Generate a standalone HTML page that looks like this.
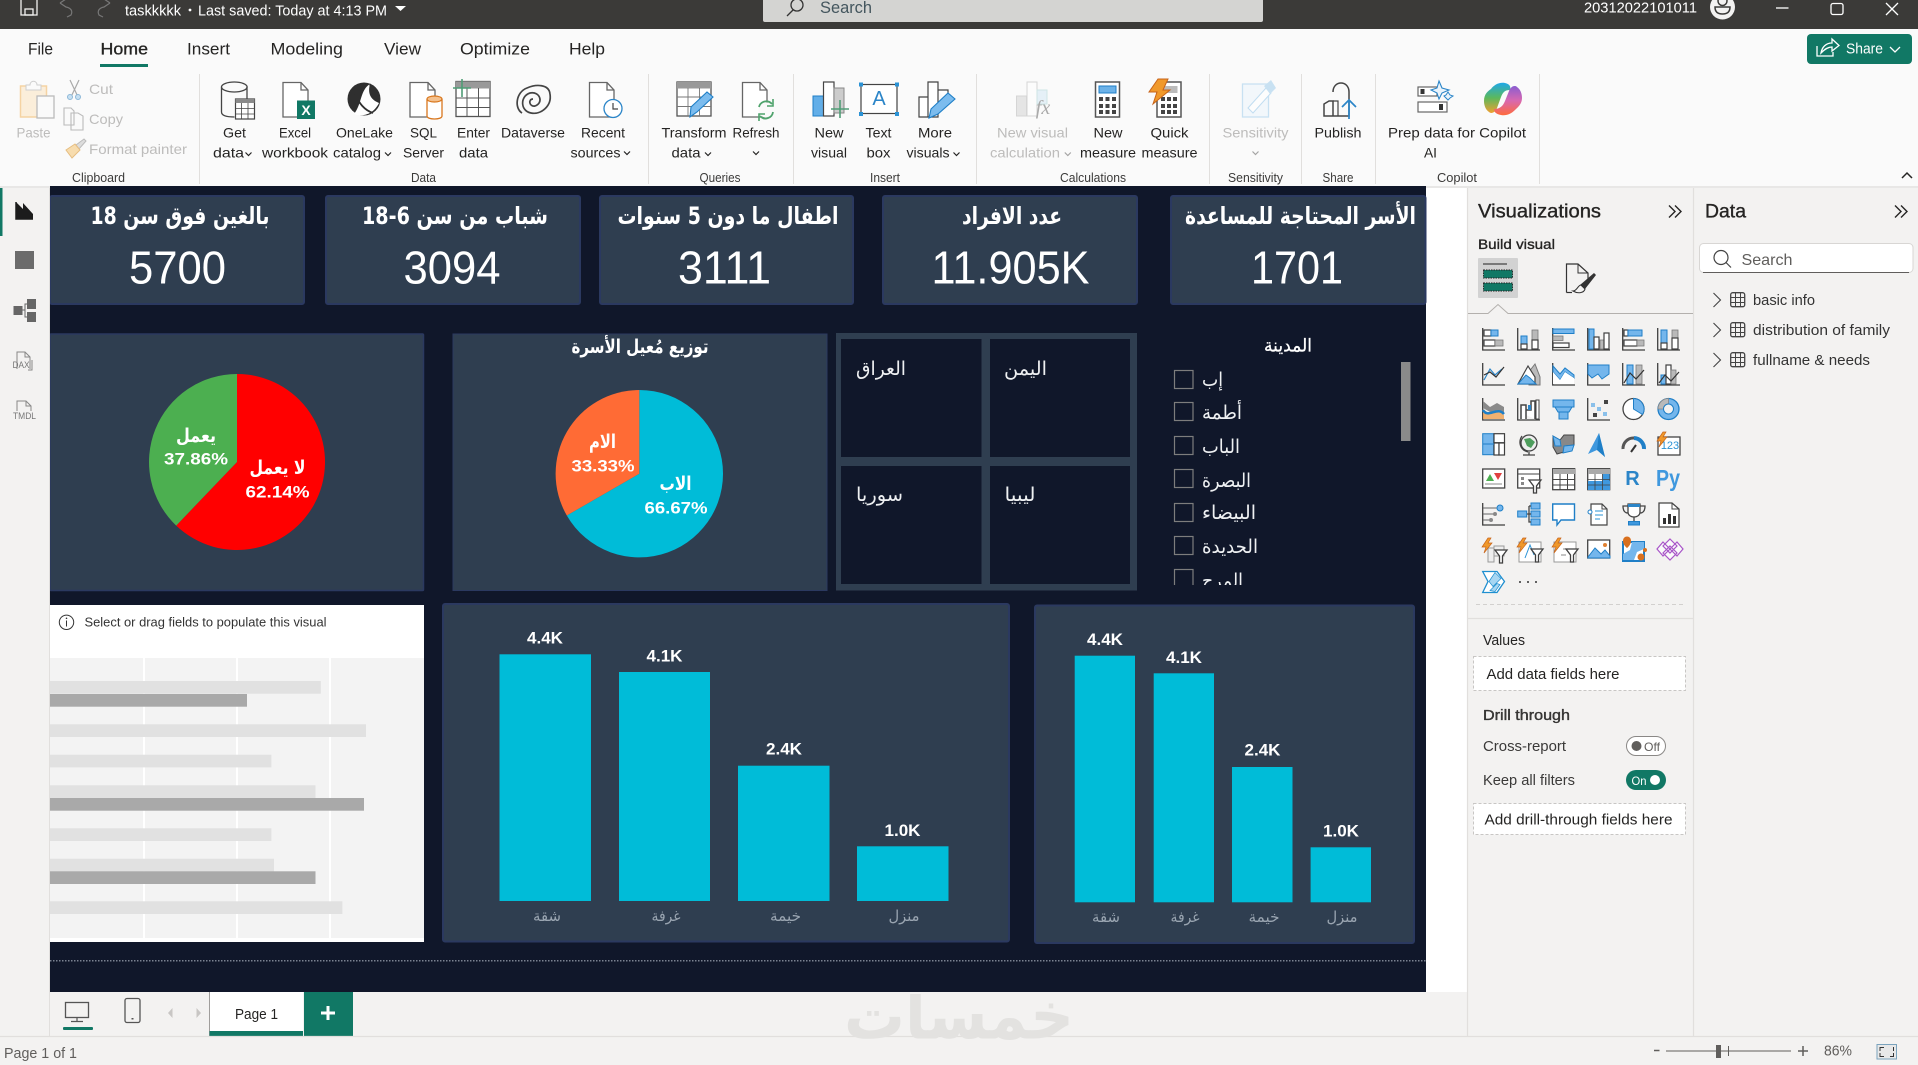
<!DOCTYPE html>
<html lang="en">
<head>
<meta charset="utf-8">
<title>taskkkkk - Power BI Desktop</title>
<style>
html,body{margin:0;padding:0;background:#f3f2f1;overflow:hidden}
svg{display:block}
text{font-family:"Liberation Sans",sans-serif;dominant-baseline:central;fill:#252423}
.r{font-size:14px}
.g{font-size:12.5px;fill:#3b3a39}
.off{fill:#bdbcbb}
.semi{stroke:#252423;stroke-width:.35}
.ar{font-family:"DejaVu Sans","Noto Sans CJK SC",sans-serif;direction:rtl}
.ct{font-size:24px;font-weight:bold;fill:#fff;text-anchor:middle}
.cv{font-size:46px;fill:#fff;text-anchor:middle}
.pl{font-size:17px;font-weight:bold;fill:#fff;text-anchor:middle}
.pa{font-size:19px;font-weight:bold;fill:#fff;text-anchor:middle}
.bl{font-size:17px;font-weight:bold;fill:#fff;text-anchor:middle}
.ax{font-size:15px;fill:#9aa5b1;text-anchor:middle}
.sl{font-size:19px;fill:#eef0f2;text-anchor:middle}
.k{fill:none;stroke:#3f3f3f;stroke-width:1.3}
.kf{fill:#fff;stroke:#3f3f3f;stroke-width:1.2}
.bu{fill:#74b6ec;stroke:#1f7fc7;stroke-width:1}
.gy{fill:#b9b9b9;stroke:#7a7a7a;stroke-width:.8}
.n{fill:none}
</style>
</head>
<body>
<svg xmlns="http://www.w3.org/2000/svg" width="1918" height="1065" viewBox="0 0 1918 1065">
<defs>
<clipPath id="slc"><rect x="1165" y="360" width="230" height="225"/></clipPath>
<clipPath id="wmc"><rect x="800" y="994" width="320" height="60"/></clipPath>
<linearGradient id="cpa" x1="0" y1="0" x2="0" y2="1"><stop offset="0" stop-color="#1fa8e8"/><stop offset=".5" stop-color="#5cb85c"/><stop offset="1" stop-color="#f0a030"/></linearGradient>
<linearGradient id="cpb" x1="0" y1="0" x2="0" y2="1"><stop offset="0" stop-color="#8a5cd0"/><stop offset=".5" stop-color="#d868b0"/><stop offset="1" stop-color="#ff6a3c"/></linearGradient>
<path id="cv" d="M-3 -1.5L0 1.5L3 -1.5" fill="none" stroke="#252423" stroke-width="1.2"/>
<g id="bolt"><path d="M6 0L0 9H4L2 15L10 5H6L9 0Z" fill="#f0992b" stroke="#c8641a" stroke-width=".7"/></g>
<g id="fun"><path d="M0 0H12L7.5 6V13H4.5V6Z" fill="#fff" stroke="#3f3f3f" stroke-width="1.3"/></g>
<path id="ch" d="M-3 -7L4 0L-3 7" fill="none" stroke="#444" stroke-width="1.1"/>
<g id="tb"><rect x=".7" y=".7" width="14" height="14" rx="2" fill="none" stroke="#444" stroke-width="1.3"/><path d="M5.5 1V15M10.5 1V15M1 5.5H15M1 10.5H15" stroke="#444" stroke-width="1"/></g>
<g id="dch"><path d="M0 0L6 6L0 12M6 0L12 6L6 12" fill="none" stroke="#252423" stroke-width="1.4"/></g>
</defs>

<!-- base -->
<rect width="1918" height="1065" fill="#f3f2f1"/>
<rect x="50" y="186" width="1417" height="806" fill="#fff"/>
<rect x="0" y="0" width="1918" height="29" fill="#3b3a38"/>
<rect x="0" y="29" width="1918" height="157" fill="#fafafa"/>
<rect x="0" y="186" width="1918" height="2" fill="#e8e7e6"/>

<!-- title bar -->
<g fill="none" stroke="#f3f2f1" stroke-width="1.3">
<path d="M21 -2V15H37V-2"/><rect x="25" y="9" width="8" height="6"/>
</g>
<path d="M60 3L66 -1M60 3L66 7C71 8 73 11 71 15L67 17" fill="none" stroke="#777" stroke-width="1.2"/>
<path d="M110 3L104 -1M110 3L104 7C99 8 97 11 99 15L103 17" fill="none" stroke="#777" stroke-width="1.2"/>
<text x="125" y="11" font-size="15" textLength="56" lengthAdjust="spacingAndGlyphs" style="fill:#fff">taskkkkk</text>
<circle cx="190" cy="10" r="1.4" fill="#fff"/>
<text x="198" y="11" font-size="15" textLength="189" lengthAdjust="spacingAndGlyphs" style="fill:#fff">Last saved: Today at 4:13 PM</text>
<path d="M395 6H406L400.500 11Z" fill="#fff"/>
<rect x="763" y="-3" width="500" height="25" rx="2" fill="#d4d4d2"/>
<circle cx="797" cy="5" r="6" fill="none" stroke="#333" stroke-width="1.3"/><path d="M793 10L787 16" stroke="#333" stroke-width="1.3"/>
<text x="820" y="8" font-size="16.500" textLength="52" lengthAdjust="spacingAndGlyphs" style="fill:#44565e">Search</text>
<text x="1584" y="8" font-size="15" textLength="113" lengthAdjust="spacingAndGlyphs" style="fill:#fff">20312022101011</text>
<circle cx="1722.500" cy="7" r="12.500" fill="#f3f2f1"/>
<circle cx="1722.500" cy="1" r="4.500" fill="none" stroke="#3b3a38" stroke-width="1.500"/>
<path d="M1715 7H1730C1730 12 1727 14 1722.500 14S1715 12 1715 7Z" fill="none" stroke="#3b3a38" stroke-width="1.500"/>
<path d="M1776 8H1788.500" stroke="#fff" stroke-width="1.300"/>
<rect x="1831" y="3.500" width="12" height="11" rx="2" fill="none" stroke="#fff" stroke-width="1.300"/>
<path d="M1886 3L1898 15M1898 3L1886 15" stroke="#fff" stroke-width="1.300"/>

<!-- tabs -->
<g font-size="17">
<text x="28" y="49" textLength="25" lengthAdjust="spacingAndGlyphs">File</text>
<text x="100.500" y="49" textLength="47.500" lengthAdjust="spacingAndGlyphs" class="semi">Home</text>
<text x="187" y="49" textLength="43" lengthAdjust="spacingAndGlyphs">Insert</text>
<text x="270.500" y="49" textLength="72.500" lengthAdjust="spacingAndGlyphs">Modeling</text>
<text x="384" y="49" textLength="37" lengthAdjust="spacingAndGlyphs">View</text>
<text x="460" y="49" textLength="70" lengthAdjust="spacingAndGlyphs">Optimize</text>
<text x="569" y="49" textLength="36" lengthAdjust="spacingAndGlyphs">Help</text>
</g>
<rect x="100" y="64" width="48" height="3" fill="#117865"/>

<!-- ribbon separators -->
<g stroke="#e1dfdd" stroke-width="1">
<path d="M199.500 74V184M648.500 74V184M793.500 74V184M976.500 74V184M1209.500 74V184M1301.500 74V184M1375.500 74V184M1539.500 74V184"/>
</g>

<!-- ribbon labels -->
<g class="r" font-size="14">
<text class="off" x="33.500" y="132.500" text-anchor="middle" font-size="14" textLength="34" lengthAdjust="spacingAndGlyphs">Paste</text>
<text class="off" x="89" y="89" font-size="14" textLength="24" lengthAdjust="spacingAndGlyphs">Cut</text>
<text class="off" x="89" y="119" font-size="14" textLength="34" lengthAdjust="spacingAndGlyphs">Copy</text>
<text class="off" x="89" y="149" font-size="14" textLength="98" lengthAdjust="spacingAndGlyphs">Format painter</text>
<g text-anchor="middle" font-size="14">
<text x="234.500" y="132.500" textLength="23" lengthAdjust="spacingAndGlyphs">Get</text>
<text x="228.500" y="152.500" textLength="31" lengthAdjust="spacingAndGlyphs">data</text>
<text x="295" y="132.500" textLength="32" lengthAdjust="spacingAndGlyphs">Excel</text>
<text x="295" y="152.500" textLength="66" lengthAdjust="spacingAndGlyphs">workbook</text>
<text x="364.500" y="132.500" textLength="57" lengthAdjust="spacingAndGlyphs">OneLake</text>
<text x="357" y="152.500" textLength="48" lengthAdjust="spacingAndGlyphs">catalog</text>
<text x="423.500" y="132.500" textLength="27" lengthAdjust="spacingAndGlyphs">SQL</text>
<text x="423.500" y="152.500" textLength="41" lengthAdjust="spacingAndGlyphs">Server</text>
<text x="473.500" y="132.500" textLength="33" lengthAdjust="spacingAndGlyphs">Enter</text>
<text x="473.500" y="152.500" textLength="29" lengthAdjust="spacingAndGlyphs">data</text>
<text x="533" y="132.500" textLength="64" lengthAdjust="spacingAndGlyphs">Dataverse</text>
<text x="603" y="132.500" textLength="44" lengthAdjust="spacingAndGlyphs">Recent</text>
<text x="595.500" y="152.500" textLength="50" lengthAdjust="spacingAndGlyphs">sources</text>
<text x="694" y="132.500" textLength="65" lengthAdjust="spacingAndGlyphs">Transform</text>
<text x="686" y="152.500" textLength="29" lengthAdjust="spacingAndGlyphs">data</text>
<text x="756" y="132.500" textLength="47" lengthAdjust="spacingAndGlyphs">Refresh</text>
<text x="829" y="132.500" textLength="29" lengthAdjust="spacingAndGlyphs">New</text>
<text x="829" y="152.500" textLength="36" lengthAdjust="spacingAndGlyphs">visual</text>
<text x="878.500" y="132.500" textLength="26" lengthAdjust="spacingAndGlyphs">Text</text>
<text x="878.500" y="152.500" textLength="24" lengthAdjust="spacingAndGlyphs">box</text>
<text x="935" y="132.500" textLength="34" lengthAdjust="spacingAndGlyphs">More</text>
<text x="928" y="152.500" textLength="43" lengthAdjust="spacingAndGlyphs">visuals</text>
<text class="off" x="1032.500" y="132.500" textLength="71" lengthAdjust="spacingAndGlyphs">New visual</text>
<text class="off" x="1025" y="152.500" textLength="70" lengthAdjust="spacingAndGlyphs">calculation</text>
<text x="1108" y="132.500" textLength="29" lengthAdjust="spacingAndGlyphs">New</text>
<text x="1108" y="152.500" textLength="56" lengthAdjust="spacingAndGlyphs">measure</text>
<text x="1169.500" y="132.500" textLength="38" lengthAdjust="spacingAndGlyphs">Quick</text>
<text x="1169.500" y="152.500" textLength="56" lengthAdjust="spacingAndGlyphs">measure</text>
<text class="off" x="1255.500" y="132.500" textLength="66" lengthAdjust="spacingAndGlyphs">Sensitivity</text>
<text x="1338" y="132.500" textLength="47" lengthAdjust="spacingAndGlyphs">Publish</text>
<text x="1457" y="132.500" textLength="138" lengthAdjust="spacingAndGlyphs">Prep data for Copilot</text>
<text x="1430.500" y="152.500" textLength="13" lengthAdjust="spacingAndGlyphs">AI</text>
</g>
</g>
<g text-anchor="middle">
<text class="g" x="98.500" y="178" textLength="53" lengthAdjust="spacingAndGlyphs">Clipboard</text>
<text class="g" x="423.500" y="178" textLength="25" lengthAdjust="spacingAndGlyphs">Data</text>
<text class="g" x="720" y="178" textLength="41" lengthAdjust="spacingAndGlyphs">Queries</text>
<text class="g" x="885" y="178" textLength="30" lengthAdjust="spacingAndGlyphs">Insert</text>
<text class="g" x="1093" y="178" textLength="66" lengthAdjust="spacingAndGlyphs">Calculations</text>
<text class="g" x="1255.500" y="178" textLength="55" lengthAdjust="spacingAndGlyphs">Sensitivity</text>
<text class="g" x="1338" y="178" textLength="31" lengthAdjust="spacingAndGlyphs">Share</text>
<text class="g" x="1457" y="178" textLength="40" lengthAdjust="spacingAndGlyphs">Copilot</text>
</g>
<use href="#cv" x="248.500" y="154"/><use href="#cv" x="388" y="154"/><use href="#cv" x="627" y="153"/><use href="#cv" x="708" y="154"/><use href="#cv" x="756" y="153"/><use href="#cv" x="956.500" y="154"/>
<g opacity=".4"><use href="#cv" x="1067.800" y="154"/><use href="#cv" x="1255.500" y="153"/></g>

<!-- clipboard icons -->
<rect x="20.500" y="86" width="26" height="31" fill="#fbeeda" stroke="#f5d3a3" stroke-width="1.500"/>
<path d="M26 90V85H30C30 80 37 80 37 85H41V90Z" fill="#fafafa" stroke="#cfcfcf"/>
<rect x="37" y="96" width="17" height="22" fill="#fafafa" stroke="#bbb" stroke-width="1.300"/>
<path d="M70 80L79 99M79 80L70 99" stroke="#aaa" stroke-width="1.200"/><circle cx="70" cy="97" r="2.500" fill="#c7e0f2" stroke="#8db8d8"/><circle cx="78" cy="97" r="2.500" fill="#c7e0f2" stroke="#8db8d8"/>
<path d="M64 110H71L74 113V127H64Z M71 115H78L83 118V132H71Z" fill="#fafafa" stroke="#bbb" stroke-width="1.100" transform="translate(0,-2)"/>
<path d="M76 145L84 139L86 141L79 149Z" fill="#ddd" stroke="#bbb"/><path d="M66 150L75 144L80 150L72 158Z" fill="#f7dcae" stroke="#e6bd80"/>

<!-- get data -->
<path d="M221.500 87V112C221.500 116 228 117 234.500 117M247 87V100" fill="none" stroke="#444" stroke-width="1.300"/><ellipse cx="234.300" cy="87" rx="12.800" ry="5" fill="none" stroke="#444" stroke-width="1.300"/>
<rect x="235.500" y="99" width="19" height="20" fill="#fff" stroke="#444" stroke-width="1.200"/><rect x="235.500" y="99" width="19" height="4" fill="#8a8a8a"/><path d="M241.500 103V119M248 103V119M235.500 108.500H254.500M235.500 114H254.500" stroke="#444" stroke-width=".8"/>
<!-- excel -->
<path d="M283 82.500H301L308 90V117H283Z" fill="#fff" stroke="#666" stroke-width="1.300"/><path d="M301 82.500V90H308" fill="none" stroke="#666" stroke-width="1.300"/>
<rect x="297" y="100.500" width="18" height="18.500" fill="#117865"/><text x="306" y="110" font-size="14" font-weight="bold" text-anchor="middle" style="fill:#fff">X</text>
<!-- onelake -->
<circle cx="364" cy="99" r="16.500" fill="#2f2f2f"/><path d="M370 84C360 90 362 104 354 114C362 117 373 115 379 103C372 100 367 95 370 84Z" fill="#fff"/><path d="M355 94C359 103 364 110 373 113M370 84C372 92 375 98 380 100" fill="none" stroke="#2f2f2f" stroke-width="1.800"/>
<!-- sql -->
<path d="M410 82.500H428L435 90V117H410Z" fill="#fff" stroke="#666" stroke-width="1.300"/><path d="M428 82.500V90H435" fill="none" stroke="#666" stroke-width="1.300"/>
<path d="M427 99V116C427 120 442 120 442 116V99" fill="#fff" stroke="#d9771e" stroke-width="1.300"/><ellipse cx="434.500" cy="99" rx="7.500" ry="3" fill="#f4c18e" stroke="#d9771e" stroke-width="1.200"/>
<!-- enter data -->
<rect x="456" y="81.500" width="34" height="35" fill="#fff" stroke="#555" stroke-width="1.300"/><rect x="456" y="81.500" width="34" height="7" fill="#999"/><path d="M467 88V117M478.500 88V117M456 98H490M456 107.500H490" stroke="#555" stroke-width="1"/>
<path d="M462 79V97M453 88H471" stroke="#4f9d76" stroke-width="1.600"/>
<!-- dataverse -->
<g fill="none" stroke="#444" stroke-width="1.700"><path d="M522 113C514 108 516 92 527 88C536 84 549 84 550 94C552 106 541 115 531 113C520 111 520 96 530 93C540 91 544 103 535 106C529 107 528 99 533 99"/></g>
<!-- recent -->
<path d="M589.500 82.500H607L614 90V117H589.500Z" fill="#fff" stroke="#666" stroke-width="1.300"/><path d="M607 82.500V90H614" fill="none" stroke="#666" stroke-width="1.300"/>
<circle cx="613" cy="108.500" r="9" fill="#fff" stroke="#2b85c8" stroke-width="1.300"/><path d="M613 103V109H618" fill="none" stroke="#444" stroke-width="1.200"/>
<!-- transform -->
<rect x="677" y="82" width="34" height="34" fill="#fff" stroke="#555" stroke-width="1.300"/><rect x="677" y="82" width="34" height="6.500" fill="#999"/><path d="M688 88V116M699.500 88V116M677 97H711M677 106.500H711" stroke="#777" stroke-width=".9"/>
<path d="M690 117L691 107L707 92L713 97L697 112Z" fill="#7cbcee" stroke="#1f7fc7" stroke-width="1.100"/>
<!-- refresh -->
<path d="M742.500 82.500H760L767 90V117H742.500Z" fill="#fff" stroke="#666" stroke-width="1.300"/><path d="M760 82.500V90H767" fill="none" stroke="#666" stroke-width="1.300"/>
<circle cx="766" cy="110" r="7.500" fill="#fafafa"/><path d="M759 107A7.500 7.500 0 0 1 772 104M773 112A7.500 7.500 0 0 1 760 116" fill="none" stroke="#4fa36c" stroke-width="1.800"/><path d="M773 99V106H767M759 121V114H765" fill="none" stroke="#4fa36c" stroke-width="1.600"/>
<!-- new visual -->
<rect x="813" y="96" width="11" height="20" fill="#62aee8" stroke="#1f7fc7"/><rect x="823.500" y="82" width="10.500" height="34" fill="#fff" stroke="#444" stroke-width="1.200"/><rect x="834" y="88" width="10" height="25" fill="#ccc" stroke="#888"/><path d="M840 100V118M831 109H849" stroke="#4f9d76" stroke-width="1.600"/>
<!-- text box -->
<rect x="861" y="84.500" width="36" height="29" fill="#fff" stroke="#444" stroke-width="1.200"/><g fill="#2b93d6"><rect x="859" y="82.500" width="4" height="4"/><rect x="895" y="82.500" width="4" height="4"/><rect x="859" y="112" width="4" height="4"/><rect x="895" y="112" width="4" height="4"/></g><text x="879" y="99" font-size="20" text-anchor="middle" style="fill:#2b85c8">A</text>
<!-- more visuals -->
<path d="M919 97H928V117H919ZM928 82H938V117H928ZM938 90H948V103" fill="#fff" stroke="#444" stroke-width="1.200"/><path d="M929 118L931 109L948 93L955 99L938 114Z" fill="#7cbcee" stroke="#1f7fc7" stroke-width="1.100"/>
<!-- new visual calc -->
<g opacity=".45"><rect x="1016.500" y="96" width="10" height="20" fill="#ccc" stroke="#aaa"/><rect x="1027" y="82" width="10" height="34" fill="#fff" stroke="#aaa"/><rect x="1037" y="90" width="10" height="14" fill="#cde4f5" stroke="#9cc"/></g>
<text x="1043" y="108" font-size="20" font-style="italic" text-anchor="middle" style="font-family:'Liberation Serif',serif;fill:#aaa">fx</text>
<!-- new measure -->
<rect x="1095.500" y="82" width="24" height="35" fill="#fff" stroke="#555" stroke-width="1.500"/><rect x="1099" y="86" width="17" height="7" fill="#6cb2e8" stroke="#1f7fc7"/>
<g fill="#444"><rect x="1099" y="97" width="4" height="4"/><rect x="1105.500" y="97" width="4" height="4"/><rect x="1112" y="97" width="4" height="4"/><rect x="1099" y="104" width="4" height="4"/><rect x="1105.500" y="104" width="4" height="4"/><rect x="1112" y="104" width="4" height="4"/><rect x="1099" y="110" width="4" height="4"/><rect x="1105.500" y="110" width="4" height="4"/><rect x="1112" y="110" width="4" height="4"/></g>
<!-- quick measure -->
<rect x="1157" y="82" width="24" height="35" fill="#fff" stroke="#555" stroke-width="1.500"/><rect x="1160.500" y="86" width="17" height="7" fill="#bbb"/>
<g fill="#444"><rect x="1161" y="97" width="4" height="4"/><rect x="1167" y="97" width="4" height="4"/><rect x="1173" y="97" width="4" height="4"/><rect x="1161" y="104" width="4" height="4"/><rect x="1167" y="104" width="4" height="4"/><rect x="1173" y="104" width="4" height="4"/><rect x="1161" y="110" width="4" height="4"/><rect x="1167" y="110" width="4" height="4"/><rect x="1173" y="110" width="4" height="4"/></g>
<path d="M1158 79H1168L1163 90H1170L1153 104L1157 92H1149Z" fill="#f0992b" stroke="#c8641a" stroke-width="1"/>
<!-- sensitivity -->
<g opacity=".6"><rect x="1242.500" y="84" width="26" height="33" fill="#eef6fc" stroke="#a8d2ee" stroke-width="1.300"/><path d="M1248 108L1266 88L1271 93L1253 113Z" fill="#fff" stroke="#9ccbec"/><path d="M1264 86L1271 80L1276 88L1270 94Z" fill="#a8d2ee"/></g>
<!-- publish -->
<path d="M1324 116V104L1329 101H1333V116ZM1333 92C1333 80 1349 80 1349 92V116H1324" fill="none" stroke="#444" stroke-width="1.500"/><path d="M1333 101L1338 101V116" fill="none" stroke="#444" stroke-width="1.200"/>
<path d="M1349 119V100M1342 107L1349 100L1356 107" fill="none" stroke="#2b85c8" stroke-width="1.700"/>
<!-- prep -->
<rect x="1418" y="87" width="19" height="9" fill="#fff" stroke="#666" stroke-width="1.200"/><rect x="1420.500" y="89" width="4" height="5" fill="#333"/>
<rect x="1418" y="102" width="29" height="10" fill="#fff" stroke="#666" stroke-width="1.200"/><rect x="1439" y="104" width="4" height="6" fill="#333"/>
<path d="M1439 81L1442 88L1449 90L1442 93L1439 99L1437 93L1431 90L1437 88Z" fill="#eaf4fc" stroke="#2b85c8" stroke-width="1.100"/><path d="M1448 92L1450 95L1453 96L1450 98L1448 100L1446 98L1444 96L1446 95Z" fill="#eaf4fc" stroke="#2b85c8"/>
<!-- copilot -->
<path d="M1484 101C1484 94 1488 91 1491 89C1494 85 1499 82 1505 83C1510 84 1511 87 1510 90C1505 90 1503 92 1501 97L1497 108C1495 113 1491 114 1489 112C1486 110 1484 106 1484 101Z" fill="url(#cpa)"/>
<path d="M1522 98C1522 104 1518 107 1515 110C1511 114 1506 116 1501 115C1496 114 1494 112 1494 109C1500 109 1503 106 1505 101L1509 91C1511 86 1515 85 1517 87C1520 89 1522 93 1522 98Z" fill="url(#cpb)"/>

<!-- share button -->
<rect x="1807" y="34" width="105" height="30" rx="4" fill="#117865"/>
<path d="M1817 46V56H1833V52M1821 53C1822 47 1826 43 1832 43V39L1839 45.500L1832 51V47C1828 47 1825 49 1821 53Z" fill="none" stroke="#fff" stroke-width="1.300"/>
<text x="1846" y="49" font-size="15" textLength="37" lengthAdjust="spacingAndGlyphs" style="fill:#fff">Share</text>
<path d="M1890 47L1895 52L1900 47" fill="none" stroke="#fff" stroke-width="1.300"/>
<path d="M1902 178L1907 173L1912 178" fill="none" stroke="#252423" stroke-width="1.500"/>

<!-- left rail -->
<rect x="0" y="186" width="2.500" height="50" fill="#117865"/>
<path d="M16 202L23 209V203L33 214V219H16Z" fill="#1c1c1c"/><path d="M16 202V219H33" fill="none" stroke="#1c1c1c" stroke-width="1.500"/>
<rect x="15" y="251" width="19" height="18" fill="#6b6b6b"/>
<rect x="13.500" y="306" width="9" height="9" fill="#666"/><rect x="27" y="299" width="9" height="10" fill="#666"/><rect x="27" y="312" width="9" height="10" fill="#666"/><path d="M22 310H25V304H27M25 310V317H27" fill="none" stroke="#666"/>
<path d="M17 369V352H25L30 357V369" fill="none" stroke="#888" stroke-width="1"/><path d="M25 352V357H30M32 360V370H28" fill="none" stroke="#888"/>
<text x="21" y="365" font-size="9" text-anchor="middle" textLength="17" lengthAdjust="spacingAndGlyphs" style="fill:#777">DAX</text>
<path d="M17 411V401H26L31 406V411" fill="none" stroke="#888" stroke-width="1"/><path d="M26 401V406H31" fill="none" stroke="#888"/>
<text x="24.500" y="416" font-size="9" text-anchor="middle" textLength="23" lengthAdjust="spacingAndGlyphs" style="fill:#777">TMDL</text>

<!-- canvas -->
<rect x="50" y="186" width="1376" height="806" fill="#10172a"/>
<g fill="#2f3e50" stroke="#2b3960" stroke-width="2">
<rect x="50" y="196" width="254" height="108" rx="2"/>
<rect x="326" y="196" width="254" height="108" rx="2"/>
<rect x="600" y="196" width="253" height="108" rx="2"/>
<rect x="883" y="196" width="254" height="108" rx="2"/>
<rect x="1171" y="196" width="254.500" height="108" rx="2"/>
</g>
<g class="ar">
<text class="ct ar" x="180" y="216" textLength="179" lengthAdjust="spacingAndGlyphs">بالغين فوق سن 18</text>
<text class="ct ar" x="455" y="216" textLength="186" lengthAdjust="spacingAndGlyphs">شباب من سن 6-18</text>
<text class="ct ar" x="728" y="216" textLength="221" lengthAdjust="spacingAndGlyphs">اطفال ما دون 5 سنوات</text>
<text class="ct ar" x="1012" y="216" textLength="100" lengthAdjust="spacingAndGlyphs">عدد الافراد</text>
<text class="ct ar" x="1300.500" y="216" textLength="231" lengthAdjust="spacingAndGlyphs">الأسر المحتاجة للمساعدة</text>
</g>
<text class="cv" x="177.500" y="267.500" textLength="97" lengthAdjust="spacingAndGlyphs">5700</text>
<text class="cv" x="452" y="267.500" textLength="97" lengthAdjust="spacingAndGlyphs">3094</text>
<text class="cv" x="724.500" y="267.500" textLength="93" lengthAdjust="spacingAndGlyphs">3111</text>
<text class="cv" x="1010.500" y="267.500" textLength="158" lengthAdjust="spacingAndGlyphs">11.905K</text>
<text class="cv" x="1297" y="267.500" textLength="92" lengthAdjust="spacingAndGlyphs">1701</text>

<!-- row 2 -->
<rect x="50" y="334" width="373.500" height="256.500" rx="1" fill="#2f3e50" stroke="#2b3960" stroke-width="1.500"/>
<path d="M237 462L237 374A88 88 0 1 1 176.200 525.600Z" fill="#ff0000"/>
<path d="M237 462L176.200 525.600A88 88 0 0 1 237 374Z" fill="#4caf50"/>
<text class="pa ar" x="196" y="436" textLength="40" lengthAdjust="spacingAndGlyphs">يعمل</text>
<text class="pl" x="196" y="459" textLength="64" lengthAdjust="spacingAndGlyphs">37.86%</text>
<text class="pa ar" x="277.500" y="468" textLength="56" lengthAdjust="spacingAndGlyphs">لا يعمل</text>
<text class="pl" x="277.500" y="492" textLength="64" lengthAdjust="spacingAndGlyphs">62.14%</text>

<rect x="453" y="334" width="374" height="256.500" fill="#2f3e50" stroke="#2b3960" stroke-width="1"/>
<text class="pa ar" x="640" y="347" textLength="137" lengthAdjust="spacingAndGlyphs">توزيع مُعيل الأسرة</text>
<path d="M639.300 473.700L639.300 390A83.700 83.700 0 1 1 566.800 515.500Z" fill="#00bcd8"/>
<path d="M639.300 473.700L566.800 515.500A83.700 83.700 0 0 1 639.300 390Z" fill="#ff6b35"/>
<text class="pa ar" x="602.500" y="442" textLength="27" lengthAdjust="spacingAndGlyphs">الام</text>
<text class="pl" x="603" y="466" textLength="63" lengthAdjust="spacingAndGlyphs">33.33%</text>
<text class="pa ar" x="675.500" y="484" textLength="32" lengthAdjust="spacingAndGlyphs">الاب</text>
<text class="pl" x="676" y="508" textLength="63" lengthAdjust="spacingAndGlyphs">66.67%</text>

<rect x="836" y="333" width="301" height="257.500" fill="#2f3e50"/>
<g fill="#10172a">
<rect x="841" y="339" width="140.500" height="118"/><rect x="990" y="339" width="140" height="118"/>
<rect x="841" y="466" width="140.500" height="118"/><rect x="990" y="466" width="140" height="118"/>
</g>
<text class="sl ar" x="881" y="369" textLength="50" lengthAdjust="spacingAndGlyphs">العراق</text>
<text class="sl ar" x="1025.500" y="369" textLength="43" lengthAdjust="spacingAndGlyphs">اليمن</text>
<text class="sl ar" x="879.500" y="495" textLength="47" lengthAdjust="spacingAndGlyphs">سوريا</text>
<text class="sl ar" x="1020" y="495" textLength="31" lengthAdjust="spacingAndGlyphs">ليبيا</text>

<!-- slicer -->
<text class="ar" x="1288" y="346" font-size="18" text-anchor="middle" textLength="48" lengthAdjust="spacingAndGlyphs" style="fill:#fff;stroke:#fff;stroke-width:.25">المدينة</text>
<rect x="1401" y="362" width="9.500" height="79" fill="#8a8a8a"/>
<g clip-path="url(#slc)">
<g fill="none" stroke="#7d7d7d" stroke-width="1.200">
<rect x="1174.500" y="370.500" width="18.500" height="18"/><rect x="1174.500" y="402.500" width="18.500" height="18"/><rect x="1174.500" y="436.500" width="18.500" height="18"/><rect x="1174.500" y="469.500" width="18.500" height="18"/><rect x="1174.500" y="503.500" width="18.500" height="18"/><rect x="1174.500" y="536.500" width="18.500" height="18"/><rect x="1174.500" y="569.500" width="18.500" height="18"/>
</g>
<text class="sl ar" x="1212.500" y="380" textLength="21" lengthAdjust="spacingAndGlyphs">إب</text>
<text class="sl ar" x="1222" y="413" textLength="40" lengthAdjust="spacingAndGlyphs">أطمة</text>
<text class="sl ar" x="1221" y="447" textLength="38" lengthAdjust="spacingAndGlyphs">الباب</text>
<text class="sl ar" x="1226.500" y="481" textLength="49" lengthAdjust="spacingAndGlyphs">البصرة</text>
<text class="sl ar" x="1229" y="513" textLength="54" lengthAdjust="spacingAndGlyphs">البيضاء</text>
<text class="sl ar" x="1230" y="547" textLength="56" lengthAdjust="spacingAndGlyphs">الحديدة</text>
<text class="sl ar" x="1222.500" y="581" textLength="41" lengthAdjust="spacingAndGlyphs">المرج</text>
</g>

<!-- placeholder visual -->
<rect x="50" y="605" width="374" height="337" fill="#fff"/>
<rect x="50" y="658" width="374" height="280" fill="#f3f3f3"/>
<g fill="#fff"><rect x="143" y="658" width="2" height="280"/><rect x="236" y="658" width="2" height="280"/><rect x="329" y="658" width="2" height="280"/></g>
<g fill="#e1e1e1">
<rect x="50" y="681" width="270.800" height="12.700"/><rect x="50" y="724.300" width="316" height="12.700"/><rect x="50" y="754.700" width="221.400" height="12.700"/><rect x="50" y="785.300" width="265.500" height="12.700"/><rect x="50" y="828.300" width="221.400" height="12.700"/><rect x="50" y="858.700" width="224" height="12.700"/><rect x="50" y="901.300" width="292.400" height="12.700"/>
</g>
<g fill="#a9a9a9"><rect x="50" y="694" width="197" height="12.700"/><rect x="50" y="798" width="314" height="12.700"/><rect x="50" y="871.300" width="265.500" height="12.700"/></g>
<circle cx="66.500" cy="622.300" r="7.200" fill="none" stroke="#333" stroke-width="1"/><path d="M66.500 620.500V626.500" stroke="#333"/><circle cx="66.500" cy="618.300" r=".8" fill="#333"/>
<text x="84.500" y="622" font-size="13" textLength="242" lengthAdjust="spacingAndGlyphs" style="fill:#333">Select or drag fields to populate this visual</text>

<!-- bar chart 1 -->
<rect x="443" y="604" width="566" height="337.500" rx="2" fill="#2f3e50" stroke="#2b3960" stroke-width="2"/>
<g fill="#00bcd8">
<rect x="499.500" y="654.300" width="91.500" height="246.700"/><rect x="619" y="672" width="91" height="229"/><rect x="738" y="765.700" width="91.500" height="135.300"/><rect x="857" y="846.300" width="91.500" height="54.700"/>
</g>
<text class="bl" x="545" y="638" textLength="36" lengthAdjust="spacingAndGlyphs">4.4K</text>
<text class="bl" x="664.500" y="656" textLength="36" lengthAdjust="spacingAndGlyphs">4.1K</text>
<text class="bl" x="784" y="749" textLength="36" lengthAdjust="spacingAndGlyphs">2.4K</text>
<text class="bl" x="902.500" y="830.500" textLength="36" lengthAdjust="spacingAndGlyphs">1.0K</text>
<text class="ax ar" x="547" y="916" textLength="28" lengthAdjust="spacingAndGlyphs">شقة</text>
<text class="ax ar" x="666" y="916" textLength="29" lengthAdjust="spacingAndGlyphs">غرفة</text>
<text class="ax ar" x="785.500" y="916" textLength="31" lengthAdjust="spacingAndGlyphs">خيمة</text>
<text class="ax ar" x="904" y="916" textLength="31" lengthAdjust="spacingAndGlyphs">منزل</text>

<!-- bar chart 2 -->
<rect x="1035" y="605.500" width="379" height="337.500" rx="2" fill="#2f3e50" stroke="#2b3960" stroke-width="2"/>
<g fill="#00bcd8">
<rect x="1074.700" y="655.700" width="60.300" height="246.600"/><rect x="1153.700" y="673.300" width="60.300" height="229"/><rect x="1232" y="767" width="60.500" height="135.300"/><rect x="1310.600" y="847.300" width="60.400" height="55"/>
</g>
<text class="bl" x="1105" y="639.300" textLength="36" lengthAdjust="spacingAndGlyphs">4.4K</text>
<text class="bl" x="1184" y="657.300" textLength="36" lengthAdjust="spacingAndGlyphs">4.1K</text>
<text class="bl" x="1262.500" y="750" textLength="36" lengthAdjust="spacingAndGlyphs">2.4K</text>
<text class="bl" x="1341" y="831" textLength="36" lengthAdjust="spacingAndGlyphs">1.0K</text>
<text class="ax ar" x="1106" y="917" textLength="28" lengthAdjust="spacingAndGlyphs">شقة</text>
<text class="ax ar" x="1185" y="917" textLength="29" lengthAdjust="spacingAndGlyphs">غرفة</text>
<text class="ax ar" x="1264" y="917" textLength="31" lengthAdjust="spacingAndGlyphs">خيمة</text>
<text class="ax ar" x="1342" y="917" textLength="31" lengthAdjust="spacingAndGlyphs">منزل</text>

<path d="M50 960.700H1426" stroke="#7a8290" stroke-width="1.500" stroke-dasharray="1.500 1.500"/>

<!-- page tabs -->
<rect x="65.500" y="1002.500" width="23" height="15" fill="none" stroke="#555" stroke-width="1.300"/><path d="M77 1017.500V1021M71 1021.500H83" stroke="#555" stroke-width="1.200"/>
<rect x="63" y="1027" width="30" height="3" rx="1" fill="#117865"/>
<rect x="125" y="998.500" width="15" height="24" rx="2" fill="none" stroke="#555" stroke-width="1.300"/><rect x="131.500" y="1018" width="2" height="1.500" fill="#555"/>
<path d="M172.500 1008L168 1013L172.500 1018Z M196.500 1008L201 1013L196.500 1018Z" fill="#c8c6c4"/>
<rect x="209.500" y="992" width="93.500" height="44" fill="#fff"/><path d="M209.500 992V1036" stroke="#8a8886" stroke-width=".8"/>
<rect x="209.500" y="1031" width="93.500" height="5" fill="#117865"/>
<text x="256.500" y="1014.500" font-size="15" text-anchor="middle" textLength="43" lengthAdjust="spacingAndGlyphs">Page 1</text>
<rect x="304" y="992" width="49" height="44" fill="#117865"/>
<path d="M328 1006V1020M321 1013H335" stroke="#fff" stroke-width="3"/>

<!-- viz panel -->
<rect x="1467" y="186" width="226" height="850" fill="#f3f2f1"/>
<rect x="1693" y="186" width="225" height="850" fill="#f3f2f1"/>
<path d="M1467.500 186V1036M1693.500 186V1036" stroke="#e1dfdd" stroke-width="1.200"/>
<rect x="0" y="186" width="50" height="2" fill="#e8e7e6"/>
<rect x="1467" y="186" width="451" height="2" fill="#e8e7e6"/>
<path d="M49.500 188V1036" stroke="#e1dfdd"/>
<text x="1478" y="212" font-size="19" class="semi" textLength="123" lengthAdjust="spacingAndGlyphs">Visualizations</text>
<use href="#dch" x="1669" y="205.500"/>
<text x="1705" y="212" font-size="19" class="semi" textLength="41" lengthAdjust="spacingAndGlyphs">Data</text>
<use href="#dch" x="1895" y="205.500"/>
<text x="1478" y="244" font-size="14" class="semi" textLength="77" lengthAdjust="spacingAndGlyphs">Build visual</text>
<rect x="1478" y="258" width="40" height="40" rx="1" fill="#d2d2d2"/>
<path d="M1483 264H1507" stroke="#444" stroke-width="1.300"/>
<rect x="1483.500" y="270" width="29" height="8" fill="#117865" stroke="#222" stroke-dasharray="1.500 1" stroke-width=".9"/>
<rect x="1483.500" y="283" width="29" height="8" fill="#117865" stroke="#222" stroke-dasharray="1.500 1" stroke-width=".9"/>
<path d="M1566.500 292.500V264H1578L1588 273V279" fill="none" stroke="#333" stroke-width="1.200"/><path d="M1578 264V273H1588" fill="none" stroke="#333" stroke-width="1"/>
<path d="M1566.500 292.500H1572" stroke="#333" stroke-width="1.200"/>
<path d="M1580 285L1594 273L1596 275L1585 289Z" fill="#333"/><path d="M1573 291C1577 291 1578 285 1581 285L1585 289C1584 293 1578 294 1573 291Z" fill="none" stroke="#333" stroke-width="1.100"/>
<path d="M1468 313.500H1488L1498 304.500L1508 313.500H1693" fill="none" stroke="#b3b0ad" stroke-width="1"/>

<!-- viz icons -->
<g transform="translate(1482,328)"><path class="k" d="M.7 0V22H23"/><rect class="kf" x="2" y="2" width="7" height="6"/><rect class="bu" x="9" y="2" width="7" height="6"/><rect class="kf" x="2" y="12" width="11" height="6"/><rect class="gy" x="13" y="12" width="8" height="6"/></g>
<g transform="translate(1517,328)"><path class="k" d="M.7 0V22H23"/><rect class="bu" x="4" y="8" width="6" height="8"/><rect class="kf" x="4" y="16" width="6" height="5"/><rect class="gy" x="15" y="2" width="6" height="10"/><rect class="kf" x="15" y="12" width="6" height="9"/></g>
<g transform="translate(1552,328)"><path class="k" d="M.7 0V22H23"/><rect class="bu" x="1" y="1" width="21" height="4.500"/><rect class="gy" x="1" y="8" width="10" height="4.500"/><rect class="kf" x="1" y="15" width="16" height="4.500"/></g>
<g transform="translate(1587,328)"><path class="k" d="M.7 0V22H23"/><rect class="bu" x="2" y="1" width="5" height="20"/><rect class="kf" x="7" y="9" width="5" height="12"/><rect class="gy" x="13" y="12" width="4" height="9"/><rect class="kf" x="17" y="5" width="5" height="16"/></g>
<g transform="translate(1622,328)"><path class="k" d="M.7 0V22H23"/><rect class="kf" x="2" y="2" width="4" height="6"/><rect class="bu" x="6" y="2" width="14" height="6"/><rect class="kf" x="2" y="12" width="13" height="6"/><rect class="gy" x="15" y="12" width="7" height="6"/></g>
<g transform="translate(1657,328)"><path class="k" d="M.7 0V22H23"/><rect class="bu" x="4" y="2" width="6" height="13"/><rect class="kf" x="4" y="15" width="6" height="6"/><rect class="gy" x="15" y="2" width="6" height="8"/><rect class="kf" x="15" y="10" width="6" height="11"/></g>

<g transform="translate(1482,363)"><path class="k" d="M.7 0V22H23"/><path d="M2 17L8 6L13 12L20 6" fill="none" stroke="#2b85c8" stroke-width="1.200"/><path d="M2 12L8 9L14 14L22 4" fill="none" stroke="#333" stroke-width="1.200"/></g>
<g transform="translate(1517,363)"><path d="M11 10L18 1L23 14V22H12Z" fill="#bbb" stroke="#777"/><path d="M1 21L11 3L18 14V21Z" fill="#fff" stroke="#444" stroke-width="1.200"/><path d="M1 21L9 12L13 15L19 21Z" fill="#74b6ec" stroke="#1f7fc7"/></g>
<g transform="translate(1552,363)"><path class="k" d="M.7 0V22H23"/><path d="M1 3L8 11L13 5L22 12V15L13 9L8 17L1 9Z" fill="#74b6ec" stroke="#1f7fc7"/><path d="M1 9L8 17L13 9L22 15V21H1Z" fill="#fff"/></g>
<g transform="translate(1587,363)"><path class="k" d="M.7 0V22H23"/><path d="M1 2H22V11L15 16L11 11L5 15L1 11Z" fill="#74b6ec" stroke="#1f7fc7"/></g>
<g transform="translate(1622,363)"><path class="k" d="M.7 0V22H23"/><rect class="bu" x="5" y="2" width="6" height="19"/><rect class="gy" x="14" y="2" width="6" height="19"/><path d="M2 20L8 10L14 16L22 7" fill="none" stroke="#333" stroke-width="1.200"/></g>
<g transform="translate(1657,363)"><path class="k" d="M.7 0V22H23"/><rect class="bu" x="4" y="12" width="5" height="9"/><rect class="kf" x="9" y="2" width="5" height="19"/><rect class="gy" x="14" y="7" width="5" height="14"/><path d="M2 20L8 12L14 18L22 9" fill="none" stroke="#333" stroke-width="1.200"/></g>

<g transform="translate(1482,398)"><path class="k" d="M.7 0V22H23"/><path d="M1 3L8 9L15 5L22 9V15L15 13L8 14L1 10Z" fill="#8a8a8a"/><path d="M1 11L8 16L15 12L22 17V21H1Z" fill="#f0a050" opacity=".8"/><path d="M1 12C6 21 15 8 22 16" fill="none" stroke="#1f7fc7" stroke-width="2.500"/></g>
<g transform="translate(1517,398)"><path class="k" d="M.7 0V22H23"/><path d="M4 21V7H9V21M9 17V12H14V3H18V21" fill="#fff" stroke="#444" stroke-width="1.500"/><rect x="11" y="7" width="3" height="5" fill="#2b85c8"/><rect x="19" y="2" width="3" height="19" fill="#fff" stroke="#444"/></g>
<g transform="translate(1552,398)"><rect class="bu" x="1" y="2" width="21" height="7"/><path d="M3 9H20L17 14H6Z" fill="#74b6ec" stroke="#1f7fc7"/><rect class="bu" x="7" y="14" width="9" height="7"/></g>
<g transform="translate(1587,398)"><path class="k" d="M.7 0V22H23"/><rect x="4" y="5" width="4" height="4" fill="#8ac0ea"/><rect x="10" y="9" width="4" height="4" fill="#8ac0ea"/><rect x="17" y="2" width="4" height="4" fill="#444"/><rect x="6" y="15" width="4" height="4" fill="#444"/><rect x="16" y="14" width="4" height="4" fill="#8ac0ea"/></g>
<g transform="translate(1622,398)"><circle cx="11.500" cy="11" r="10.500" fill="#fff" stroke="#444" stroke-width="1.300"/><path d="M11.500 11V.5A10.500 10.500 0 0 1 20.500 16.500Z" fill="#74b6ec" stroke="#1f7fc7"/></g>
<g transform="translate(1657,398)"><circle cx="11.500" cy="11" r="10.500" fill="#74b6ec" stroke="#1f7fc7" stroke-width="1.300"/><path d="M11.500 .5A10.500 10.500 0 0 0 1 11H6.500A5 5 0 0 1 11.500 6Z" fill="#b9b9b9" stroke="#888" stroke-width=".8"/><circle cx="11.500" cy="11" r="5" fill="#f3f2f1" stroke="#1f7fc7"/></g>

<g transform="translate(1482,433)"><rect class="bu" x=".7" y=".7" width="11" height="21"/><rect class="kf" x="12" y=".7" width="10.500" height="9"/><rect class="kf" x="12" y="10" width="5" height="12"/><rect class="kf" x="17" y="10" width="5.500" height="12"/><path d="M1 11H12" stroke="#1f7fc7"/></g>
<g transform="translate(1517,433)"><circle cx="12" cy="10" r="8" fill="#eee" stroke="#444" stroke-width="1.300"/><path d="M7 6L13 5L18 9L14 15L10 13Z" fill="#4e9e5d"/><path d="M5 3C1 9 3 17 11 19M6 22H18M12 19V22" fill="none" stroke="#444" stroke-width="1.300"/></g>
<g transform="translate(1552,433)"><path d="M1 3L8 7L12 2H22V12L14 13L12 19L5 21L1 14Z" fill="#888" stroke="#444"/><path d="M1 3L8 7L9 13L3 13Z" fill="#74b6ec" stroke="#1f7fc7"/><path d="M12 13L22 12L20 18L11 20Z" fill="#74b6ec" stroke="#1f7fc7"/></g>
<g transform="translate(1587,433)"><path d="M12 0L18 24L10 17L1 21Z" fill="#3f98de"/><path d="M12 0L18 24L10 17Z" fill="#1f7fc7"/></g>
<g transform="translate(1622,433)"><path d="M1 16A10.500 10.500 0 0 1 12 5" fill="none" stroke="#555" stroke-width="3"/><path d="M12 5A10.500 10.500 0 0 1 22 16" fill="none" stroke="#1f7fc7" stroke-width="4"/><path d="M9 19L14 12" stroke="#333" stroke-width="2"/></g>
<g transform="translate(1657,433)"><rect x="1" y="4" width="22" height="18" fill="#fff" stroke="#444" stroke-width="1.300"/><text x="13" y="13" font-size="11" text-anchor="middle" style="fill:#2b93d6">123</text><use href="#bolt" x="0" y="-1"/></g>

<g transform="translate(1482,468)"><rect x=".7" y="1" width="22" height="19" fill="#fff" stroke="#444" stroke-width="1.300"/><path d="M4 13L8 6L12 13Z" fill="#4caf50"/><path d="M12 5H20L16 12Z" fill="#e04040"/><path d="M3 16H20" stroke="#888"/></g>
<g transform="translate(1517,468)"><rect x=".7" y="1" width="22" height="19" fill="#fff" stroke="#444" stroke-width="1.300"/><path d="M1 6H23" stroke="#444"/><g fill="#888"><rect x="4" y="9" width="3" height="3"/><rect x="4" y="14" width="3" height="3"/></g><use href="#fun" x="12" y="12"/></g>
<g transform="translate(1552,468)"><rect x=".7" y=".7" width="22" height="21" fill="#fff" stroke="#444" stroke-width="1.300"/><rect x="1" y="1" width="22" height="5" fill="#aaa"/><path d="M8 6V22M15.500 6V22M1 11.500H23M1 17H23" stroke="#444"/></g>
<g transform="translate(1587,468)"><rect x=".7" y=".7" width="22" height="21" fill="#fff" stroke="#444" stroke-width="1.300"/><rect x="1" y="1" width="22" height="5" fill="#aaa"/><rect x="15.500" y="6" width="7" height="16" fill="#3f98de"/><rect x="1" y="13" width="22" height="9" fill="#3f98de"/><path d="M8 6V22M15.500 6V22M1 11.500H23M1 17H23" stroke="#444" stroke-width=".8"/></g>
<text x="1632.500" y="479" font-size="20" font-weight="bold" text-anchor="middle" style="fill:#2b85c8">R</text>
<text x="1668" y="478" font-size="23" font-weight="bold" text-anchor="middle" textLength="24" lengthAdjust="spacingAndGlyphs" style="fill:#3f98de">Py</text>

<g transform="translate(1482,503)"><path class="k" d="M.7 0V22H23"/><path d="M1 5H17M1 11H13M1 17H9" stroke="#666" fill="none"/><circle cx="18" cy="5" r="3" fill="#74b6ec" stroke="#1f7fc7"/><circle cx="13" cy="11" r="2" fill="#888"/><circle cx="9" cy="17" r="2" fill="#888"/></g>
<g transform="translate(1517,503)"><rect class="bu" x=".7" y="8" width="9" height="6"/><rect class="bu" x="14" y="0" width="9" height="6"/><rect class="bu" x="14" y="8" width="9" height="6"/><rect class="bu" x="14" y="16" width="9" height="6"/><path d="M10 11H14M12 3V19H14M12 3H14" stroke="#444" fill="none" stroke-width="1.300"/></g>
<g transform="translate(1552,503)"><path d="M.7 1H22.500V17H9L5 22V17H.7Z" fill="#fff" stroke="#1f7fc7" stroke-width="1.400"/></g>
<g transform="translate(1587,503)"><path d="M4 1H15L20 6V22H4Z" fill="#fff" stroke="#444" stroke-width="1.200"/><path d="M15 1V6H20" fill="none" stroke="#444"/><circle cx="3" cy="9" r="2" fill="#fff" stroke="#1f7fc7"/><path d="M8 8H16M8 12H16M8 16H13" stroke="#2b93d6"/></g>
<g transform="translate(1622,503)"><path d="M6 1H18V9C18 13 14 14 12 14S6 13 6 9Z" fill="#fff" stroke="#444" stroke-width="1.300"/><rect x="6" y="1" width="12" height="3" fill="#2b85c8"/><path d="M6 3H1C1 8 3 10 6 10M18 3H23C23 8 21 10 18 10M12 14V18" fill="none" stroke="#444" stroke-width="1.300"/><rect x="6.500" y="18.500" width="11" height="3.500" fill="#3f98de" stroke="#1f7fc7"/></g>
<g transform="translate(1657,503)"><path d="M2 0H15L22 6V24H2Z" fill="#fff" stroke="#444" stroke-width="1.300"/><path d="M15 0V6H22" fill="none" stroke="#444"/><rect x="6" y="15" width="3" height="6" fill="#333"/><rect x="11" y="11" width="3" height="10" fill="#333"/><rect x="16" y="13" width="3" height="8" fill="#333"/></g>

<g transform="translate(1482,538)"><path d="M6 10H12V24H6ZM12 8H22V18H12Z" fill="#eee" stroke="#999"/><use href="#bolt" x="0" y="0"/><use href="#fun" x="13" y="12"/></g>
<g transform="translate(1517,538)"><path d="M2 4H24V24H2Z" fill="#fff" stroke="#999"/><path d="M8 20L13 7L17 17" fill="none" stroke="#2b93d6"/><use href="#bolt" x="0" y="0"/><use href="#fun" x="14" y="11"/></g>
<g transform="translate(1552,538)"><path d="M2 4H24V24H2Z" fill="#fff" stroke="#999"/><path d="M11 11H20M9 17H14" stroke="#888"/><use href="#bolt" x="0" y="0"/><use href="#fun" x="14" y="11"/></g>
<g transform="translate(1587,538)"><rect x=".7" y="2" width="22" height="18" fill="#fff" stroke="#444" stroke-width="1.300"/><path d="M1 19L8 10L14 16L18 12L23 18V20H1Z" fill="#74b6ec" stroke="#1f7fc7"/><circle cx="18" cy="7" r="2" fill="#e08030"/></g>
<g transform="translate(1622,538)"><rect x="1" y="4" width="21" height="19" fill="#fff" stroke="#1f7fc7" stroke-width="2"/><path d="M10 4H22V11L15 14L12 22H1V16L8 12Z" fill="#74b6ec"/><path d="M1 3C1 -3 9 -3 9 3C9 7 5 10 5 10S1 7 1 3Z" fill="#d9701e"/><circle cx="19" cy="19" r="3.500" fill="#d9701e"/><circle cx="23" cy="12" r="2" fill="#d9701e"/></g>
<g transform="translate(1657,538)"><path d="M12 1L19 8L12 15L5 8Z M12 8L19 15L12 22L5 15Z M5 4L12 11L5 18L-1 11Z M19 4L25 11L19 18L12 11Z" fill="#fafafa" stroke="#a855c8" stroke-width="1.200" transform="translate(1,0)"/></g>
<g transform="translate(1482,570.500)"><path d="M.7 1H15L22.500 11L15 22H.7L6 11Z" fill="#fff" stroke="#1f8fd0" stroke-width="1.300"/><path d="M7 11L13 2L19 8L11 16Z M8 20L15 13L18 14L13 21Z" fill="#a7d6f2" stroke="#1f8fd0" stroke-width=".7"/></g>
<g fill="#333"><circle cx="1520" cy="582" r="1"/><circle cx="1528" cy="582" r="1"/><circle cx="1536" cy="582" r="1"/></g>

<path d="M1476 604.500H1686" stroke="#d2d0ce" stroke-dasharray="4 3"/>
<path d="M1468 618.500H1693" stroke="#e1dfdd" stroke-width="1.200"/>
<text x="1483" y="641" font-size="14.500" textLength="42" lengthAdjust="spacingAndGlyphs">Values</text>
<rect x="1473.500" y="656.500" width="212" height="34" fill="#fff" stroke="#c8c6c4" stroke-dasharray="3 2"/>
<text x="1486.500" y="675" font-size="14.500" textLength="133" lengthAdjust="spacingAndGlyphs">Add data fields here</text>
<text x="1483" y="716" font-size="14.500" class="semi" textLength="87" lengthAdjust="spacingAndGlyphs" style="fill:#3b3a39">Drill through</text>
<text x="1483" y="747" font-size="14.500" textLength="83" lengthAdjust="spacingAndGlyphs" style="fill:#3b3a39">Cross-report</text>
<rect x="1626.500" y="736.500" width="39" height="19" rx="9.500" fill="#fff" stroke="#8a8886"/>
<circle cx="1636.500" cy="746" r="5" fill="#605e5c"/>
<text x="1644" y="747" font-size="12" textLength="16" lengthAdjust="spacingAndGlyphs" style="fill:#605e5c">Off</text>
<text x="1483" y="781" font-size="14.500" textLength="92" lengthAdjust="spacingAndGlyphs" style="fill:#3b3a39">Keep all filters</text>
<rect x="1626" y="770" width="40" height="20" rx="10" fill="#117865"/>
<text x="1631.500" y="781" font-size="12" textLength="15" lengthAdjust="spacingAndGlyphs" style="fill:#fff">On</text>
<circle cx="1655" cy="780" r="5" fill="#fff"/>
<rect x="1473.500" y="803.500" width="212" height="31" fill="#fff" stroke="#c8c6c4" stroke-dasharray="3 2"/>
<text x="1484.500" y="820.500" font-size="14.500" textLength="188" lengthAdjust="spacingAndGlyphs">Add drill-through fields here</text>

<!-- data panel -->
<rect x="1699.500" y="243.500" width="213.500" height="29" rx="4" fill="#fff" stroke="#d8d6d4"/>
<path d="M1703 272.500H1909" stroke="#605e5c"/>
<circle cx="1721" cy="257.500" r="7" fill="none" stroke="#444" stroke-width="1.200"/><path d="M1726 262.500L1731 267.500" stroke="#444" stroke-width="1.200"/>
<text x="1741.500" y="260.500" font-size="16" textLength="51" lengthAdjust="spacingAndGlyphs" style="fill:#605e5c">Search</text>
<use href="#ch" x="1716.500" y="300"/><use href="#ch" x="1716.500" y="330"/><use href="#ch" x="1716.500" y="360"/>
<use href="#tb" x="1730" y="292"/><use href="#tb" x="1730" y="322"/><use href="#tb" x="1730" y="352"/>
<text x="1753" y="301" font-size="14.500" textLength="62" lengthAdjust="spacingAndGlyphs" style="fill:#333">basic info</text>
<text x="1753" y="331" font-size="14.500" textLength="137" lengthAdjust="spacingAndGlyphs" style="fill:#333">distribution of family</text>
<text x="1753" y="361" font-size="14.500" textLength="117" lengthAdjust="spacingAndGlyphs" style="fill:#333">fullname &amp; needs</text>

<!-- status bar -->
<path d="M0 1036.500H1918" stroke="#e1dfdd" stroke-width="1.200"/>
<text x="4" y="1053.500" font-size="15" textLength="73" lengthAdjust="spacingAndGlyphs" style="fill:#605e5c">Page 1 of 1</text>
<path d="M1654 1050.500H1659.500" stroke="#605e5c" stroke-width="1.500"/>
<path d="M1666 1051H1791" stroke="#605e5c" stroke-width="1"/><rect x="1716" y="1045" width="5" height="13" fill="#605e5c"/><path d="M1728.500 1046V1056" stroke="#605e5c"/>
<path d="M1798 1051H1808M1803 1046V1056" stroke="#605e5c" stroke-width="1.500"/>
<text x="1824" y="1051" font-size="15" textLength="28" lengthAdjust="spacingAndGlyphs" style="fill:#605e5c">86%</text>
<rect x="1877" y="1044.500" width="19.500" height="14.500" fill="#e8e8e8" stroke="#7aa3bd" stroke-width="1"/>
<path d="M1880 1051V1047.500H1884M1893 1047.500H1893.500V1051M1893.500 1053V1056.500H1890M1884 1056.500H1880V1053" fill="none" stroke="#333"/>

<!-- watermark -->
<g clip-path="url(#wmc)"><text class="ar" x="959" y="1016" font-size="66" font-weight="bold" text-anchor="middle" textLength="230" lengthAdjust="spacingAndGlyphs" style="fill:#e3e2e0">خمسات</text></g>
</svg>
</body>
</html>
